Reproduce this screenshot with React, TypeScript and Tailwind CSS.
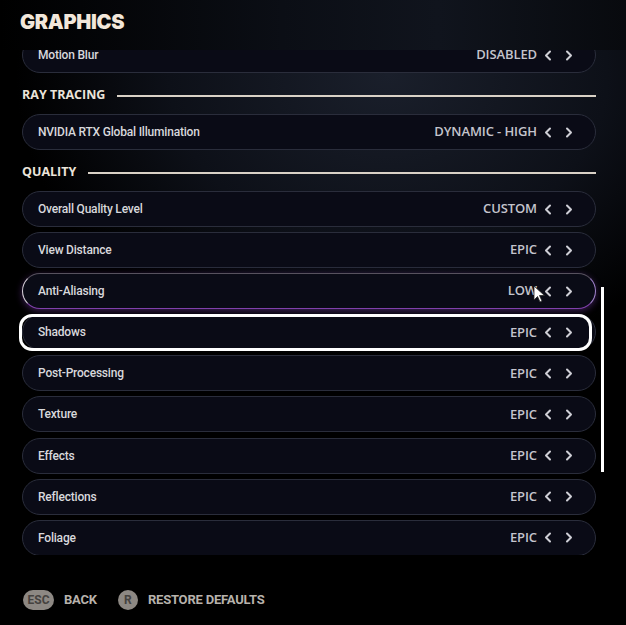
import React from 'react';

type Row = { label: string; value: string; state?: 'hover' | 'focus' };

const quality: Row[] = [
  { label: 'Overall Quality Level', value: 'CUSTOM' },
  { label: 'View Distance', value: 'EPIC' },
  { label: 'Anti-Aliasing', value: 'LOW', state: 'hover' },
  { label: 'Shadows', value: 'EPIC', state: 'focus' },
  { label: 'Post-Processing', value: 'EPIC' },
  { label: 'Texture', value: 'EPIC' },
  { label: 'Effects', value: 'EPIC' },
  { label: 'Reflections', value: 'EPIC' },
  { label: 'Foliage', value: 'EPIC' },
];

function Chevron({ dir }: { dir: 'left' | 'right' }) {
  return (
    <svg width="8" height="11" viewBox="0 0 8 11" className="text-[#cfcfd6]">
      <path
        d={dir === 'left' ? 'M6 1.5 L2 5.5 L6 9.5' : 'M2 1.5 L6 5.5 L2 9.5'}
        fill="none"
        stroke="currentColor"
        strokeWidth="2"
        strokeLinecap="round"
        strokeLinejoin="round"
      />
    </svg>
  );
}

function SettingRow({ label, value, state }: Row) {
  const border =
    state === 'hover'
      ? 'border-t-[#57525e] border-l-[#d6d0d8] border-b-[#8040ab] border-r-[#a184cc] shadow-[0_2px_7px_rgba(140,70,200,0.4)]'
      : 'border-[#2a2d3b]';
  return (
    <div
      className={`relative h-[36px] shrink-0 rounded-full border bg-[#0a0b16] flex items-center pl-[15px] pr-[22px] ${border}`}
    >
      {state === 'focus' && (
        <div className="absolute -left-[4px] right-[3px] -top-[1px] -bottom-[2px] rounded-[13px] border-[3px] border-white" />
      )}
      <span className="flex-1 text-[12px] font-medium tracking-[-0.2px] text-[#d8d8dc] [font-family:Roboto,sans-serif]">
        {label}
      </span>
      <span className="text-[13px] font-semibold tracking-[-0.1px] text-[#c4c4cc] [font-family:'Open_Sans',sans-serif]">
        {value}
      </span>
      <div className="ml-[7px] flex items-center gap-[13px]">
        <Chevron dir="left" />
        <Chevron dir="right" />
      </div>
    </div>
  );
}

function SectionTitle({ title }: { title: string }) {
  return (
    <div className="h-[41px] shrink-0 flex items-center gap-[12px] pt-[4px]">
      <span className="text-[12.5px] font-bold text-[#ebe4da] [font-family:'Open_Sans',sans-serif]">
        {title}
      </span>
      <div className="flex-1 h-[2px] bg-[#d9d1c6]" />
    </div>
  );
}

export default function App() {
  return (
    <div className="relative w-[626px] h-[625px] overflow-hidden bg-[radial-gradient(ellipse_70%_55%_at_62%_12%,#1a1f2b_0%,#0d1018_50%,#000000_85%)]">
      {/* header */}
      <div className="h-[50px] pl-[20px] pt-[7px] bg-[linear-gradient(90deg,#000000_0%,#0b0e15_45%,#10141d_70%,#080a0e_100%)]">
        <h1 className="text-[20px] font-black tracking-[-0.3px] text-[#f2e7da] [font-family:Inter,sans-serif]">
          GRAPHICS
        </h1>
      </div>

      {/* list */}
      <div className="relative h-[505px] overflow-hidden pl-[22px] pr-[30px]">
        <div className="-mt-[13px] flex flex-col">
          <SettingRow label="Motion Blur" value="DISABLED" />
          <SectionTitle title="RAY TRACING" />
          <SettingRow label="NVIDIA RTX Global Illumination" value="DYNAMIC - HIGH" />
          <SectionTitle title="QUALITY" />
          <div className="flex flex-col gap-[5.1px]">
            {quality.map((r) => (
              <SettingRow key={r.label} {...r} />
            ))}
          </div>
        </div>
        {/* scrollbar */}
        <div className="absolute left-[601px] top-[237px] w-[3px] h-[185px] bg-white" />
      </div>

      {/* cursor */}
      <svg className="absolute left-[533px] top-[285px]" width="13" height="18" viewBox="0 0 13 18">
        <path d="M1 1 L1 15 L4.5 11.5 L7 17 L9 16 L6.5 10.5 L11.5 10.5 Z" fill="#ffffff" stroke="#222" strokeWidth="0.8" />
      </svg>

      {/* footer */}
      <div className="h-[70px] bg-black flex items-center gap-[10px] pl-[23px] pt-[19px] [font-family:Roboto,sans-serif]">
        <span className="h-[20px] w-[31px] rounded-full bg-[#8d8883] flex items-center justify-center text-[12px] font-bold text-[#45423f]">
          ESC
        </span>
        <span className="text-[13px] font-bold tracking-[-0.2px] text-[#b7b2ac]">BACK</span>
        <span className="ml-[11px] h-[20px] w-[20px] rounded-full bg-[#8d8883] flex items-center justify-center text-[12px] font-bold text-[#45423f]">
          R
        </span>
        <span className="text-[13px] font-bold tracking-[-0.2px] text-[#b7b2ac]">RESTORE DEFAULTS</span>
      </div>
    </div>
  );
}
